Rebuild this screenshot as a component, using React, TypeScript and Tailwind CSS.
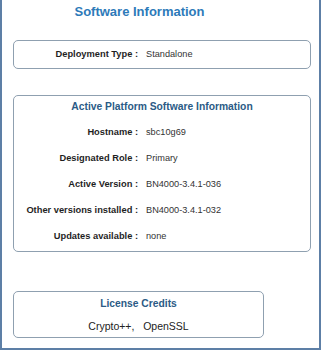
import React from "react";

const rows = [
  { label: "Hostname :", value: "sbc10g69" },
  { label: "Designated Role :", value: "Primary" },
  { label: "Active Version :", value: "BN4000-3.4.1-036" },
  { label: "Other versions installed :", value: "BN4000-3.4.1-032" },
  { label: "Updates available :", value: "none" },
];

const Row = ({ label, value }: { label: string; value: string }) => (
  <div className="flex items-center h-[26px]">
    <div className="w-[124px] text-right font-bold text-[9.3px] text-[#1f1f1f] whitespace-nowrap">{label}</div>
    <div className="pl-[8px] text-[9.2px] text-[#333] whitespace-nowrap">{value}</div>
  </div>
);

export default function App() {
  return (
    <div
      className="w-[321px] h-[350px] bg-white border-l-2 border-r-2 border-b-2 border-[#5d7fa6] overflow-hidden"
      style={{ fontFamily: '"Liberation Sans", Arial, sans-serif' }}
    >
      {/* Page title */}
      <div className="w-[275px] pt-[3px] text-center text-[13px] font-bold text-[#2d7ab9] leading-[18px]">
        Software Information
      </div>

      {/* Deployment */}
      <div className="ml-[11px] mt-[19px] w-[298px] h-[29px] border border-[#8fa0b0] rounded-[5px] flex items-center">
        <Row label="Deployment Type :" value="Standalone" />
      </div>

      {/* Active platform */}
      <div className="ml-[11px] mt-[26px] w-[298px] h-[157px] border border-[#8fa0b0] rounded-[5px]">
        <div className="pt-[4px] pb-[6px] text-center text-[10.3px] font-bold text-[#2b5b86] leading-[14px]">
          Active Platform Software Information
        </div>
        <div className="flex flex-col">
          {rows.map((r) => (
            <Row key={r.label} label={r.label} value={r.value} />
          ))}
        </div>
      </div>

      {/* License credits */}
      <div className="ml-[11px] mt-[39px] w-[251px] h-[47px] border border-[#8fa0b0] rounded-[5px]">
        <div className="pt-[5px] text-center text-[10.3px] font-bold text-[#2b5b86] leading-[14px]">
          License Credits
        </div>
        <div className="pt-[8px] text-center text-[10.5px] text-[#222] leading-[14px]">
          Crypto++,&nbsp;&nbsp; OpenSSL
        </div>
      </div>
    </div>
  );
}
